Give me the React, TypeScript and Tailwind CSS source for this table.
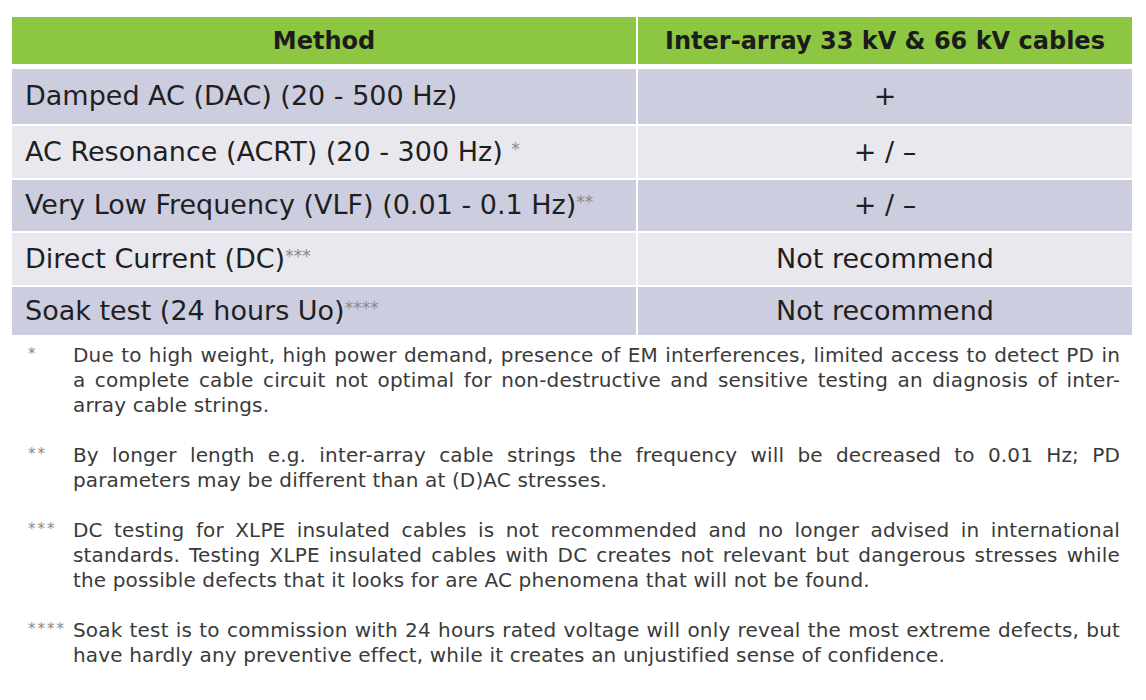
import React from "react";

function Star({ n }: { n: string }) {
  return <span className="text-[#8a8a8a] text-[17px] align-[6px]">{n}</span>;
}

const rows: { m: React.ReactNode; v: string; dark: boolean; h: string }[] = [
  { m: <>Damped AC (DAC) (20 - 500 Hz)</>, v: "+", dark: true, h: "h-[55px]" },
  { m: <>AC Resonance (ACRT) (20 - 300 Hz) <Star n="*" /></>, v: "+ / –", dark: false, h: "h-[52px]" },
  { m: <>Very Low Frequency (VLF) (0.01 - 0.1 Hz)<Star n="**" /></>, v: "+ / –", dark: true, h: "h-[51px]" },
  { m: <>Direct Current (DC)<Star n="***" /></>, v: "Not recommend", dark: false, h: "h-[52px]" },
  { m: <>Soak test (24 hours Uo)<Star n="****" /></>, v: "Not recommend", dark: true, h: "h-[48px]" },
];

const notes = [
  { k: "*", t: "Due to high weight, high power demand, presence of EM interferences, limited access to detect PD in a complete cable circuit not optimal for non-destructive and sensitive testing an diagnosis of inter-array cable strings." },
  { k: "**", t: "By longer length e.g. inter-array cable strings the frequency will be decreased to 0.01 Hz; PD parameters may be different than at (D)AC stresses." },
  { k: "***", t: "DC testing for XLPE insulated cables is not recommended and no longer advised in international standards. Testing XLPE insulated cables with DC creates not relevant but dangerous stresses while the possible defects that it looks for are AC phenomena that will not be found." },
  { k: "****", t: "Soak test is to commission with 24 hours rated voltage will only reveal the most extreme defects, but have hardly any preventive effect, while it creates an unjustified sense of confidence." },
];

export default function App() {
  return (
    <div className="w-[1146px] h-[700px] bg-white overflow-hidden pt-[17px] pl-[12px] font-['DejaVu_Sans',sans-serif]">
      <div className="w-[1120px] grid grid-cols-[624px_494px] gap-x-[2px]">
        <div className="h-[47px] bg-[#8dc641] flex items-center justify-center text-[24px] font-bold text-[#1c1c1c]">Method</div>
        <div className="h-[47px] bg-[#8dc641] flex items-center justify-center text-[24px] font-bold text-[#1c1c1c]">Inter-array 33 kV &amp; 66 kV cables</div>
        <div className="col-span-2 h-[5px]" />
        {rows.map((r, i) => (
          <React.Fragment key={i}>
            <div className={`${r.h} ${r.dark ? "bg-[#cdcde0]" : "bg-[#e8e8ee]"} flex items-center pl-[13px] text-[27px] text-[#1f1f1f] ${i < 4 ? "mb-[2px]" : ""}`}>
              <span>{r.m}</span>
            </div>
            <div className={`${r.h} ${r.dark ? "bg-[#cdcde0]" : "bg-[#e8e8ee]"} flex items-center justify-center text-[27px] text-[#1f1f1f] ${i < 4 ? "mb-[2px]" : ""}`}>
              {r.v}
            </div>
          </React.Fragment>
        ))}
      </div>
      <div className="mt-[8px] w-[1108px] flex flex-col gap-[25px]">
        {notes.map((n, i) => (
          <div key={i} className="flex">
            <div className="w-[61px] pl-[16px] text-[15px] tracking-[2px] leading-[22px] text-[#8a8a8a]">{n.k}</div>
            <p className="w-[1047px] text-[20px] tracking-[0.15px] leading-[25px] text-[#3a3a3a] text-justify">{n.t}</p>
          </div>
        ))}
      </div>
    </div>
  );
}
